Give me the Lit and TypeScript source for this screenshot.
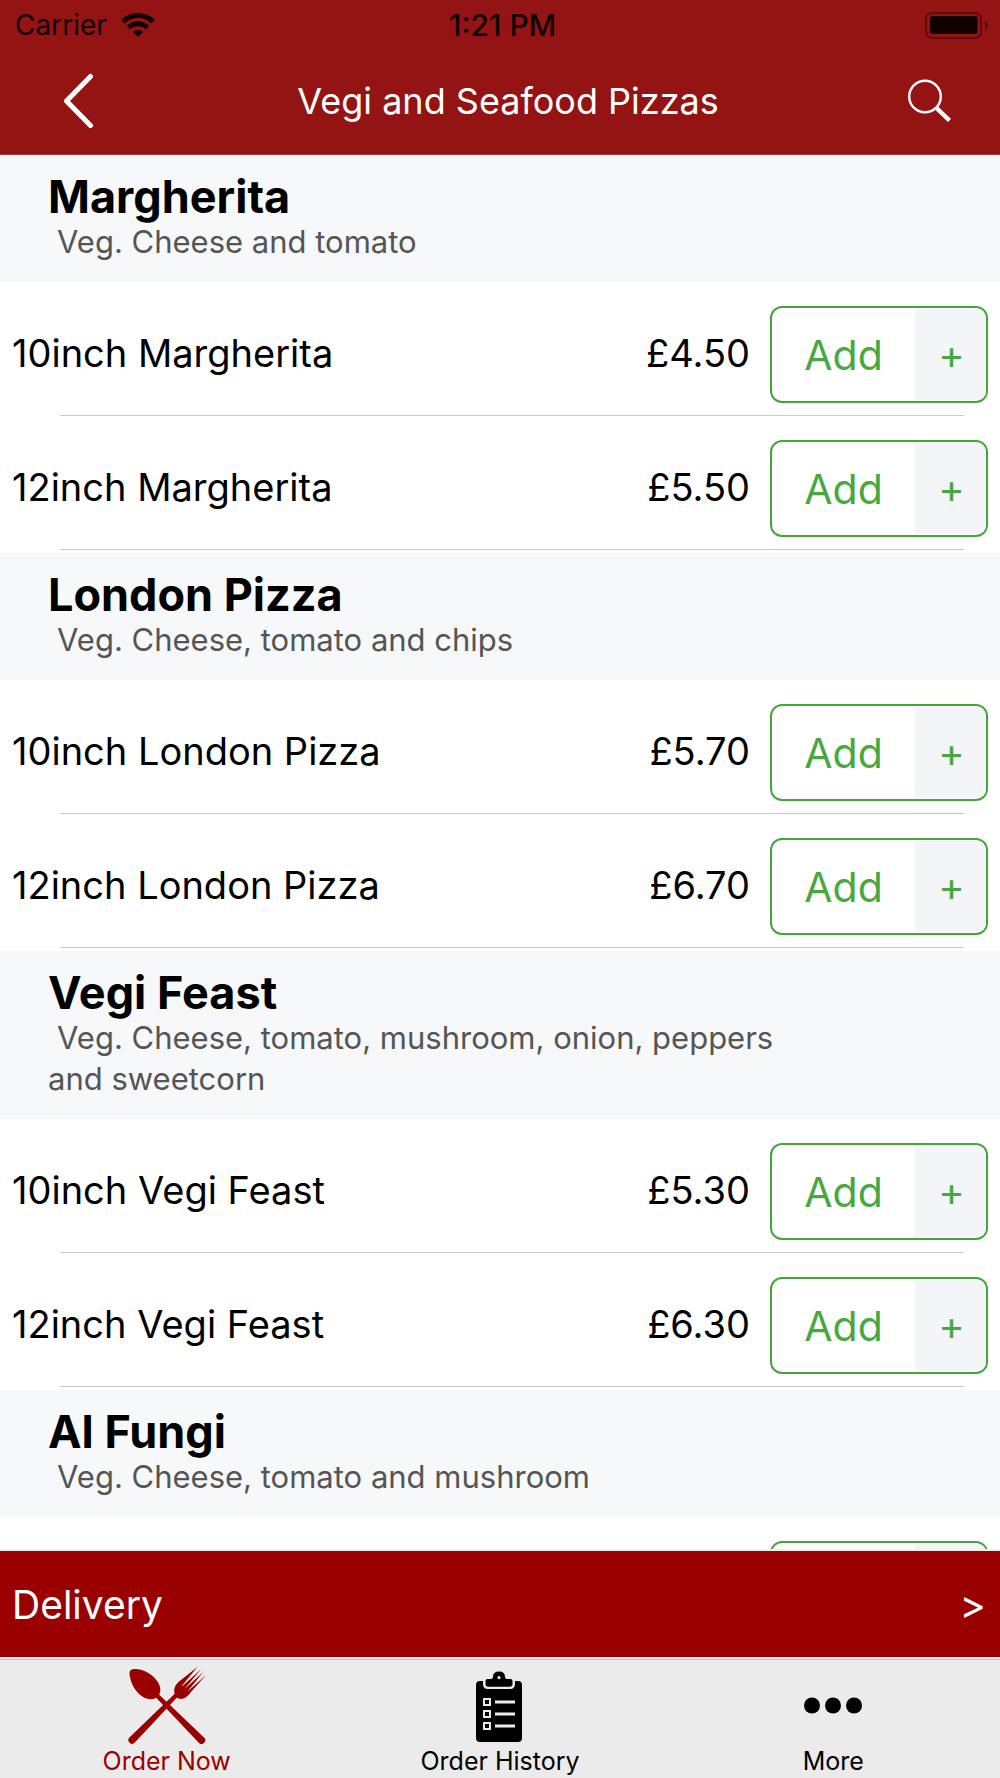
import { LitElement, html, svg, css } from "lit";
import { customElement, property } from "lit/decorators.js";

interface Item {
  name: string;
  price: string;
}

interface Group {
  title: string;
  note: string;
  items: Item[];
}

const MENU: Group[] = [
  {
    title: "Margherita",
    note: "Veg. Cheese and tomato",
    items: [
      { name: "10inch Margherita", price: "£4.50" },
      { name: "12inch Margherita", price: "£5.50" },
    ],
  },
  {
    title: "London Pizza",
    note: "Veg. Cheese, tomato and chips",
    items: [
      { name: "10inch London Pizza", price: "£5.70" },
      { name: "12inch London Pizza", price: "£6.70" },
    ],
  },
  {
    title: "Vegi Feast",
    note: "Veg. Cheese, tomato, mushroom, onion, peppers and sweetcorn",
    items: [
      { name: "10inch Vegi Feast", price: "£5.30" },
      { name: "12inch Vegi Feast", price: "£6.30" },
    ],
  },
  {
    title: "Al Fungi",
    note: "Veg. Cheese, tomato and mushroom",
    items: [{ name: "", price: "" }],
  },
];

const cutlery = svg`
  <path d="M1.5 6 C1.5 3 4 1.800 8 2 C18 2.500 30 11 32 20 C33 25 31.500 27.500 30 29 C28.500 31.500 25 32.500 21 32 C10 30.500 2 17 1.500 6Z" />
  <path d="M27.500 30 L30.500 27 L76 70.500 A3.600 3.600 0 0 1 71 76 Z" />
  <path d="M47 26.500 L50 29.500 L6.800 75.500 A3.600 3.600 0 0 1 1.400 70.500 Z" />
  <path d="M46.500 26 C45.500 21 47.500 17.500 51.500 14.200 L54.500 18.500 L62 26 C59 30 56.500 31.800 53 31.900 C50 32 47 29.500 46.500 26Z" />
  <path d="M50.500 15 L69.400 0 L54.800 17.800 L51 19Z M53.500 20 L73 2.300 L57.500 20.800 L55 22.500Z M56 22.500 L75.300 5 L60.300 23.500 L57 25Z M58.500 25.500 L78 8 L62.500 25.600 L59 29Z" />
`;

const clipboard = svg`
  <path d="M19 14 H22 V17 Q22 22 27 22 H49 Q54 22 54 17 V14 H57 Q61 14 61 18 V71 Q61 75 57 75 H19 Q15 75 15 71 V18 Q15 14 19 14Z" />
  <path fill-rule="evenodd" d="M24.500 14 Q24.500 12 26.500 12 H30 Q32 12 32 10 Q32 4.500 38 4.500 Q44 4.500 44 10 Q44 12 46 12 H49.500 Q51.500 12 51.500 14 V17 Q51.500 19.700 48.500 19.700 H27.500 Q24.500 19.700 24.500 17Z M38 9 A1.600 1.600 0 1 0 38 12.200 A1.600 1.600 0 1 0 38 9Z" />
  ${[31, 43, 55].map(
    (y) => svg`
      <path class="paper" fill-rule="evenodd" d="M22 ${y} h8 v8 h-8Z M24 ${y + 2} v4 h4 v-4Z" />
      <rect x="25" y="${y + 3}" width="2" height="2" />
      <rect class="paper" x="34" y="${y + 2.5}" width="20" height="3" />`
  )}
`;

const dots = svg`
  <circle cx="18" cy="38.500" r="8" />
  <circle cx="39" cy="38.500" r="8" />
  <circle cx="60" cy="38.500" r="8" />
`;

@customElement("menu-row")
class MenuRow extends LitElement {
  @property() name = "";
  @property() price = "";

  static styles = css`
    :host {
      display: block;
      padding-top: 24px;
    }
    .row {
      display: flex;
      align-items: center;
      padding: 0 12px 12px;
      gap: 20px;
    }
    .name,
    .price {
      font-size: 38px;
      line-height: 44px;
      padding-bottom: 3px;
    }
    .name {
      flex: 1;
    }
    .add {
      display: flex;
      box-sizing: border-box;
      width: 218px;
      height: 97px;
      padding: 0;
      border: 2px solid #43a53c;
      border-radius: 12px;
      overflow: hidden;
      background: #fff;
      color: #47a83f;
      font: inherit;
      font-size: 41px;
      cursor: pointer;
    }
    .label,
    .plus {
      display: flex;
      align-items: center;
      justify-content: center;
    }
    .label {
      flex: 1;
    }
    .plus {
      width: 71px;
      margin: 1px 0;
      padding-left: 2px;
      box-sizing: border-box;
      align-self: stretch;
      background: #f4f5f8;
      font-size: 40px;
    }
    .line {
      height: 1px;
      margin: 0 36px 0 60px;
      background: #c9c9c9;
    }
  `;

  render() {
    return html`
      <div class="row">
        <span class="name">${this.name}</span>
        <span class="price">${this.price}</span>
        <button class="add" aria-label="Add ${this.name}">
          <span class="label">${this.name ? "Add" : ""}</span>
          <span class="plus">${this.name ? "+" : ""}</span>
        </button>
      </div>
      <div class="line"></div>
    `;
  }
}

@customElement("app-root")
class AppRoot extends LitElement {
  static styles = css`
    :host {
      display: flex;
      flex-direction: column;
      height: 100vh;
      background: #fff;
      color: #000;
      font-family: Inter, "Liberation Sans", sans-serif;
    }
    button {
      border: 0;
      padding: 0;
      background: none;
      color: inherit;
      font: inherit;
      cursor: pointer;
    }
    svg {
      display: block;
    }
    .top {
      background: #941313;
      border-bottom: 1px solid #a23a3a;
      padding-bottom: 3px;
    }
    .status {
      display: grid;
      grid-template-columns: 1fr auto 1fr;
      align-items: center;
      height: 50px;
      padding: 0 12px 0 15px;
      color: #100000;
      font-size: 28px;
    }
    .carrier {
      display: flex;
      align-items: center;
      gap: 14px;
    }
    .time {
      padding-left: 2px;
      font-size: 30px;
      font-weight: 500;
    }
    .battery {
      justify-self: end;
    }
    .nav {
      display: flex;
      align-items: center;
      height: 101px;
      color: #fff;
    }
    .back {
      width: 116px;
      padding-left: 62px;
    }
    .search {
      width: 100px;
      padding-left: 8px;
    }
    h1 {
      flex: 1;
      margin: 0;
      text-align: center;
      font-size: 36px;
      font-weight: 400;
    }
    .list {
      flex: 1;
      min-height: 0;
      overflow-y: auto;
      scrollbar-width: none;
    }
    .group-head {
      padding: 18px 180px 20px 48px;
      background: #f7f8fa;
    }
    h2 {
      margin: 0;
      font-size: 45px;
      line-height: 48px;
      font-weight: 700;
    }
    .note {
      margin: 0;
      color: #555;
      font-size: 31px;
      line-height: 41px;
      text-indent: 9px;
    }
    .rows {
      padding-bottom: 3px;
    }
    .delivery {
      display: flex;
      align-items: center;
      justify-content: space-between;
      height: 110px;
      box-sizing: border-box;
      padding: 0 14px 0 12px;
      border-top: 2px solid #f2ecec;
      border-bottom: 2px solid #f0eeee;
      background: #9b0000;
      color: #fff;
      font-size: 39px;
    }
    .more {
      font-size: 40px;
    }
    .tabs {
      display: grid;
      grid-template-columns: repeat(3, 1fr);
      border-top: 1px solid #bcc0c0;
      background: #ebebeb;
    }
    .tab {
      display: flex;
      flex-direction: column;
      align-items: center;
      gap: 2px;
      padding: 7px 0 3px;
      color: #000;
      text-decoration: none;
      font-size: 25px;
      line-height: 28px;
    }
    .tab.active {
      color: #9b0000;
    }
    .tab svg {
      fill: currentColor;
    }
    .paper {
      fill: #ebebeb;
    }
  `;

  private tab(label: string, art: unknown, active = false) {
    return html`
      <a class="tab ${active ? "active" : ""}" href="#">
        <svg width="78" height="78" viewBox="0 0 78 78" aria-hidden="true">${art}</svg>
        <span>${label}</span>
      </a>
    `;
  }

  render() {
    return html`
      <header class="top">
        <div class="status">
          <span class="carrier">
            Carrier
            <svg width="34" height="24" viewBox="0 0 34 24" aria-hidden="true">
              <g fill="none" stroke="currentColor" stroke-width="5">
                <path d="M1.800 8.800 A21.500 21.500 0 0 1 32.200 8.800" />
                <path d="M7.400 14.600 A13.600 13.600 0 0 1 26.600 14.600" />
              </g>
              <path d="M17 24 L12 19 A7.200 7.200 0 0 1 22 19Z" fill="currentColor" />
            </svg>
          </span>
          <span class="time">1:21 PM</span>
          <svg class="battery" width="63" height="27" viewBox="0 0 63 27" aria-hidden="true">
            <rect x="1" y="1" width="55" height="25" rx="6" fill="none" stroke="#5f0c0c" stroke-width="2" />
            <rect x="5" y="4" width="47.500" height="18" rx="3" fill="currentColor" />
            <path d="M60 8.500 Q63 10 63 13.500 Q63 17 60 18.500Z" fill="#5f0c0c" />
          </svg>
        </div>
        <div class="nav">
          <button class="back" aria-label="Back">
            <svg width="32" height="56" viewBox="0 0 32 56" fill="none" stroke="currentColor" stroke-width="5" stroke-linecap="round" stroke-linejoin="round">
              <path d="M28.500 3.500 L4.500 28 L28.500 52.500" />
            </svg>
          </button>
          <h1>Vegi and Seafood Pizzas</h1>
          <button class="search" aria-label="Search">
            <svg width="44" height="44" viewBox="0 0 44 44" fill="none" stroke="currentColor">
              <circle cx="17" cy="17.500" r="15.800" stroke-width="2.400" />
              <path d="M28 28.500 L41.500 41.500" stroke-width="4.500" />
            </svg>
          </button>
        </div>
      </header>
      <main class="list">
        ${MENU.map(
          (g) => html`
            <section>
              <div class="group-head">
                <h2>${g.title}</h2>
                <p class="note">${g.note}</p>
              </div>
              <div class="rows">
                ${g.items.map((i) => html`<menu-row .name=${i.name} .price=${i.price}></menu-row>`)}
              </div>
            </section>
          `
        )}
      </main>
      <button class="delivery"><span>Delivery</span><span class="more">&gt;</span></button>
      <nav class="tabs">
        ${this.tab("Order Now", cutlery, true)}
        ${this.tab("Order History", clipboard)}
        ${this.tab("More", dots)}
      </nav>
    `;
  }
}
